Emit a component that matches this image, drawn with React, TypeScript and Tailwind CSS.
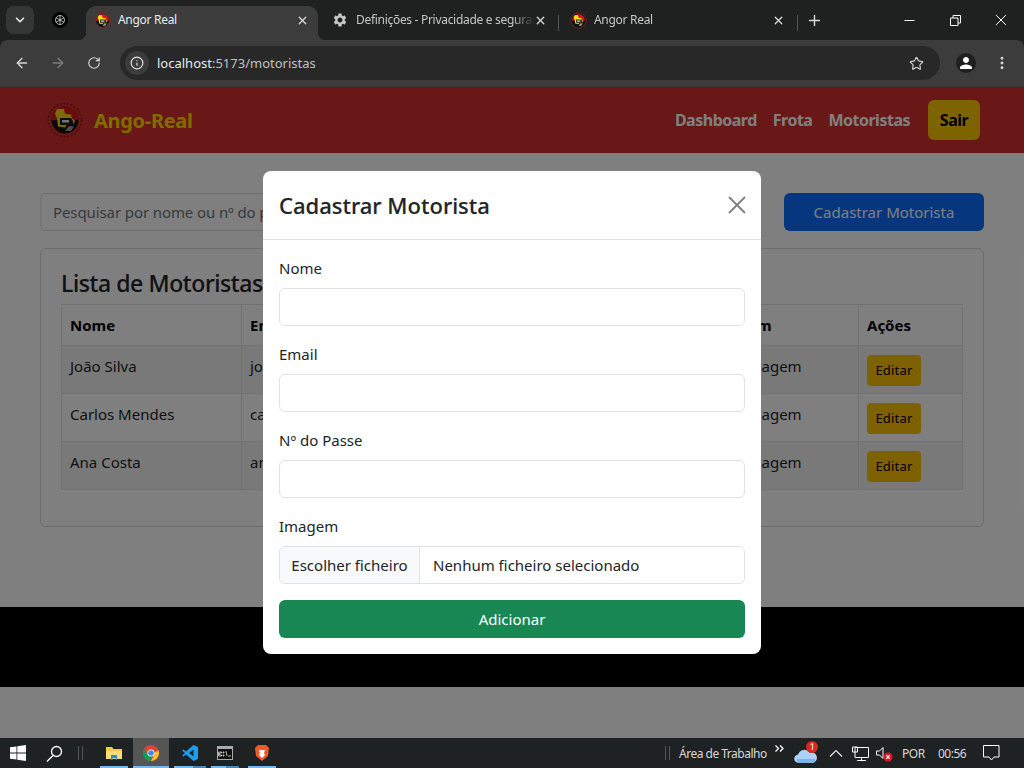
import { ChevronDown, Info, MoreVertical, Plus, RotateCw, Star, X, ArrowLeft, ArrowRight } from "lucide-react";
import { MdPerson, MdSettings } from "react-icons/md";

const motoristas = [
  { nome: "João Silva", email: "joao@email.com", passe: "LD123456" },
  { nome: "Carlos Mendes", email: "carlos@email.com", passe: "LD654321" },
  { nome: "Ana Costa", email: "ana@email.com", passe: "LD112233" },
];

function AngoLogo({ size }: { size: number }) {
  return (
    <svg width={size} height={size} viewBox="0 0 36 36" className="shrink-0">
      <circle cx="18" cy="18" r="16.5" fill="none" stroke="#a51d1d" strokeWidth="2" strokeDasharray="2 1.6" />
      <circle cx="18" cy="18" r="13.5" fill="#16100e" />
      <path d="M4.500 18a13.500 13.500 0 0 1 27 0z" fill="#d9161b" />
      <path d="M10 7h7l1 5 6 .5 1 4 3 2-1 3-7 1-2 3-7-1-1-8-2-5z" fill="#f7dd0c" />
      <path d="M13 16h11l2 3v4H13z" fill="#1d1d1d" />
      <path d="M15 18h7v2.500h-7z" fill="#e6e6e6" />
      <path d="M18 29l4-5 5 .5-3 4.500z" fill="#9a9a9a" />
    </svg>
  );
}

function Tab({ icon, title, active, className }: { icon: React.ReactNode; title: string; active?: boolean; className: string }) {
  return (
    <div className={`${className} h-[34px] flex items-center pb-[6px] relative ${active ? "bg-[#3c3c3c] rounded-t-[10px] text-[#e8eaed]" : "text-[#c4c7c5]"}`}>
      {active && (
        <>
          <div className="absolute left-[-8px] bottom-0 w-2 h-2 bg-[radial-gradient(circle_at_0_0,transparent_8px,#3c3c3c_8.5px)]" />
          <div className="absolute right-[-8px] bottom-0 w-2 h-2 bg-[radial-gradient(circle_at_100%_0,transparent_8px,#3c3c3c_8.5px)]" />
        </>
      )}
      <span className="w-4 h-4 flex items-center justify-center shrink-0">{icon}</span>
      <span className={`ml-2 flex-1 text-[12px] tracking-[-0.3px] whitespace-nowrap overflow-hidden ${active ? "" : "[mask-image:linear-gradient(to_right,black_88%,transparent)]"}`}>{title}</span>
      <X size={13} strokeWidth={2.5} className="shrink-0 text-[#d5d7d8]" />
    </div>
  );
}

function ChromeBar() {
  return (
    <div className="font-['Noto_Sans',sans-serif]">
      <div className="h-10 bg-[#1f2121] flex items-end relative">
        <div className="absolute left-[6px] top-[6px] w-7 h-7 rounded-lg bg-[#353636] flex items-center justify-center">
          <ChevronDown size={14} strokeWidth={3} className="text-[#e3e3e3]" />
        </div>
        <div className="absolute left-[52px] top-[12px] w-4 h-4 rounded-full bg-black flex items-center justify-center">
          <svg width="12" height="12" viewBox="0 0 24 24" fill="none" stroke="#d8d8d8" strokeWidth="1.6">
            <circle cx="12" cy="12" r="9" />
            <path d="M12 3v18M4 7.500l16 9M20 7.500l-16 9" />
          </svg>
        </div>
        <div className="ml-[86px] flex items-end">
          <Tab className="w-[232px] pl-[8px] pr-[9px]" active title="Angor Real" icon={<AngoLogo size={17} />} />
          <div className="w-[6px]" />
          <Tab className="w-[234px] pl-[8px] pr-[11px]" title="Definições - Privacidade e segurança" icon={<MdSettings size={18} className="text-[#c4c7c5]" />} />
          <div className="w-px h-4 bg-[#555] mb-[9px]" />
          <Tab className="w-[238px] pl-[11px] pr-[12px]" title="Angor Real" icon={<AngoLogo size={17} />} />
          <div className="w-px h-4 bg-[#555] mb-[9px]" />
          <div className="w-[32px] h-[34px] pb-[6px] flex items-center justify-center">
            <Plus size={17} strokeWidth={2} className="text-[#d5d7d8]" />
          </div>
        </div>
        <div className="absolute right-0 top-0 h-10 flex items-center text-white">
          <div className="w-[46px] flex justify-center">
            <svg width="11" height="11" viewBox="0 0 11 11" fill="none" stroke="currentColor"><path d="M.5 5.500h10" /></svg>
          </div>
          <div className="w-[46px] flex justify-center">
            <svg width="11" height="11" viewBox="0 0 11 11" fill="none" stroke="currentColor">
              <path d="M.5 3h7.500v7.500H.5zM3 3V.5h7.500V8H8" />
            </svg>
          </div>
          <div className="w-[46px] flex justify-center">
            <svg width="12" height="12" viewBox="0 0 12 12" fill="none" stroke="currentColor"><path d="M1 1l10 10M11 1L1 11" /></svg>
          </div>
        </div>
      </div>
      <div className="h-[47px] bg-[#3c3c3c] rounded-t-[8px] flex items-center border-b border-[#333]">
        <div className="w-[44px] flex justify-center"><ArrowLeft size={16} strokeWidth={2} className="text-[#d5d7d8]" /></div>
        <div className="w-[28px] flex justify-center"><ArrowRight size={16} strokeWidth={2} className="text-[#7b7c7d]" /></div>
        <div className="w-[44px] flex justify-center"><RotateCw size={14} strokeWidth={2} className="text-[#d5d7d8]" /></div>
        <div className="ml-[4px] w-[820px] h-[34px] rounded-full bg-[#282828] flex items-center pl-[5px] relative">
          <div className="w-6 h-6 rounded-full bg-[#3c3c3c] flex items-center justify-center">
            <Info size={14} className="text-[#e3e3e3]" />
          </div>
          <span className="ml-2 mt-px text-[13px] text-[#e8e8e8]">localhost<span className="text-[#bdc1c6]">:5173/motoristas</span></span>
          <Star size={15} strokeWidth={1.8} className="absolute right-[16px] text-[#d5d7d8]" />
        </div>
        <div className="ml-[16px] w-5 h-5 rounded-full bg-[#1f1f1f] flex items-center justify-center">
          <MdPerson size={18} className="text-white" />
        </div>
        <MoreVertical size={16} strokeWidth={2.4} className="ml-[18px] text-[#d5d7d8]" />
      </div>
    </div>
  );
}

function PageBehind() {
  return (
    <div className="bg-white h-[651px] font-['Noto_Sans',sans-serif] text-[#212529]">
      <nav className="h-[66px] bg-[#d22f2f] pl-[47px] pr-[44px] flex items-center">
        <AngoLogo size={36} />
        <span className="ml-[11px] mt-[2px] text-[20px] font-bold text-[#ffd700] tracking-[-0.3px]">Ango-Real</span>
        <div className="ml-auto flex items-center gap-4 text-[16px] font-bold text-white tracking-[-0.5px]">
          <span>Dashboard</span>
          <span>Frota</span>
          <span>Motoristas</span>
          <span className="ml-[2px] w-[52px] h-10 rounded-md bg-[#fdc800] text-black flex items-center justify-center">Sair</span>
        </div>
      </nav>
      <main className="h-[454px] px-10 pt-10">
        <div className="flex gap-6">
          <input
            className="flex-1 h-[38px] border border-[#dee2e6] rounded-md px-3 text-[15px] tracking-[-0.1px] placeholder:text-[#6c757d]"
            placeholder="Pesquisar por nome ou nº do passe"
          />
          <div className="w-[200px] h-[38px] rounded-md bg-[#0d6efd] text-white text-[15px] flex items-center justify-center">
            Cadastrar Motorista
          </div>
        </div>
        <div className="mt-[17px] h-[279px] border border-black/15 rounded-md px-5 pt-5">
          <h2 className="text-[23px] leading-7 font-medium tracking-[-0.4px] [-webkit-text-stroke:0.15px_currentColor]">Lista de Motoristas</h2>
          <table className="mt-[7px] w-[902px] table-fixed border-collapse text-[15px]">
            <thead>
              <tr className="h-[41px]">
                <th className="w-[180px] border border-[#dee2e6] px-2 text-left font-bold text-black">Nome</th>
                <th className="w-[240px] border border-[#dee2e6] px-2 text-left font-bold text-black">Email</th>
                <th className="w-[219px] border border-[#dee2e6] px-2 text-left font-bold text-black">Nº do Passe</th>
                <th className="w-[158px] border border-[#dee2e6] px-2 text-left font-bold text-black">Imagem</th>
                <th className="border border-[#dee2e6] px-2 text-left font-bold text-black">Ações</th>
              </tr>
            </thead>
            <tbody>
              {motoristas.map((m, i) => (
                <tr key={m.nome} className={`h-12 ${i % 2 === 0 ? "bg-black/5" : ""}`}>
                  <td className="border border-[#dee2e6] px-2 align-top pt-[9px]">{m.nome}</td>
                  <td className="border border-[#dee2e6] px-2 align-top pt-[9px]">{m.email}</td>
                  <td className="border border-[#dee2e6] px-2 align-top pt-[9px]">{m.passe}</td>
                  <td className="border border-[#dee2e6] px-2 align-top pt-[9px]">Sem imagem</td>
                  <td className="border border-[#dee2e6] px-2 pt-[2px]">
                    <span className="w-[54px] h-[31px] rounded bg-[#ffc107] text-black text-[13px] tracking-[0.2px] flex items-center justify-center">Editar</span>
                  </td>
                </tr>
              ))}
            </tbody>
          </table>
        </div>
      </main>
      <footer className="h-[80px] bg-black" />
    </div>
  );
}

function Field({ label }: { label: string }) {
  return (
    <div>
      <label className="block text-[15px] leading-[20px]">{label}</label>
      <input className="mt-[10px] block w-full h-[38px] border border-[#dee2e6] rounded-md" />
    </div>
  );
}

function ModalCadastro() {
  return (
    <div className="absolute left-[263px] top-[84px] w-[498px] h-[483px] bg-white rounded-lg font-['Noto_Sans',sans-serif] text-[#212529]">
      <div className="h-[69px] border-b border-[#dee2e6] px-4 flex items-center justify-between">
        <h3 className="text-[22px] font-medium [-webkit-text-stroke:0.15px_currentColor]">Cadastrar Motorista</h3>
        <svg width="18" height="18" viewBox="0 0 18 18" fill="none" stroke="#808080" strokeWidth="1.9" className="mr-[-1px]">
          <path d="M1 1l16 16M17 1L1 17" />
        </svg>
      </div>
      <div className="px-4 pt-[18px] flex flex-col gap-[18px]">
        <Field label="Nome" />
        <Field label="Email" />
        <Field label="Nº do Passe" />
        <div>
          <label className="block text-[15px] leading-[20px]">Imagem</label>
          <div className="mt-[10px] h-[38px] border border-[#dee2e6] rounded-md flex overflow-hidden text-[15px]">
            <span className="w-[140px] bg-[#f8f9fa] border-r border-[#dee2e6] flex items-center justify-center">Escolher ficheiro</span>
            <span className="pl-[13px] flex items-center">Nenhum ficheiro selecionado</span>
          </div>
        </div>
      </div>
      <div className="mx-4 mt-4 h-[38px] rounded-md bg-[#198754] text-white text-[15px] flex items-center justify-center">
        Adicionar
      </div>
    </div>
  );
}

function TaskItem({ className, split, children }: { className: string; split?: boolean; children: React.ReactNode }) {
  return (
    <div className={`${className} h-[30px] relative flex items-center justify-center shrink-0`}>
      {children}
      <div className="absolute left-0 right-0 bottom-0 h-[2px] bg-[#76b9ed]" />
      {split && <div className="absolute right-0 bottom-0 w-[13px] h-[2px] bg-[#4d86b3]" />}
    </div>
  );
}

function Taskbar() {
  return (
    <div className="h-[30px] bg-[#1f2223] relative flex items-center text-[#d8d8d8] font-['Noto_Sans',sans-serif] text-[12px] tracking-[-0.5px]">
      <svg width="16" height="16" viewBox="0 0 16 16" fill="#fff" className="ml-[10px] shrink-0">
        <path d="M0 2.300l6.500-.9v6.200H0zM7.300 1.300L16 0v7.600H7.300zM0 8.400h6.500v6.200L0 13.700zM7.300 8.400H16V16l-8.700-1.200z" />
      </svg>
      <svg width="17" height="17" viewBox="0 0 17 17" fill="none" stroke="#fff" strokeWidth="1.3" className="ml-[20px] shrink-0">
        <circle cx="10.500" cy="6.500" r="5" />
        <path d="M7 10.500L1 16.500" />
      </svg>
      <div className="ml-[15px] w-[5px] h-[14px] border-x border-[#555] shrink-0" />
      <TaskItem className="ml-[17px] w-[28px]">
        <svg width="16" height="14" viewBox="0 0 16 14">
          <path d="M0 1h6l1.500 2H16v10H0z" fill="#f6c94e" />
          <path d="M0 5h16v8H0z" fill="#fbdc7c" />
          <path d="M5 9h6v5H9.500v-2h-3v2H5z" fill="#2a8ad4" />
        </svg>
      </TaskItem>
      <TaskItem className="ml-[5px] w-9 bg-[#555]">
        <svg width="16" height="16" viewBox="0 0 16 16">
          <circle cx="8" cy="8" r="8" fill="#db4437" />
          <path d="M8 16a8 8 0 0 1-7-12l3.500 6L8 11z" fill="#0f9d58" />
          <path d="M15.500 5.200A8 8 0 0 1 8 16l3.400-6-.4-2z" fill="#fbc02d" />
          <circle cx="8" cy="8" r="3.600" fill="#fff" />
          <circle cx="8" cy="8" r="2.800" fill="#4285f4" />
        </svg>
      </TaskItem>
      <TaskItem className="ml-[5px] w-8" split>
        <svg width="16" height="16" viewBox="0 0 16 16">
          <path d="M11.500 0L16 2v12l-4.500 2L4 9.500 1.500 11.500 0 10.500 3 8 0 5.500l1.500-1L4 6.500zM11.500 4.500L7 8l4.500 3.500z" fill="#1f9cf0" fillRule="evenodd" />
        </svg>
      </TaskItem>
      <TaskItem className="ml-[5px] w-[28px]" split>
        <svg width="16" height="14" viewBox="0 0 16 14">
          <rect x="0.500" y="0.500" width="15" height="13" fill="#111" stroke="#aaa" />
          <path d="M1 1h14v2H1z" fill="#aaa" />
          <path d="M2.500 6h2v1h-2v2h2v1h-3V6zM6 6h1v1H6zM6 9h1v1H6zM9 5l1 5M11 10h3" stroke="#eee" strokeWidth=".7" fill="none" />
        </svg>
      </TaskItem>
      <TaskItem className="ml-[9px] w-[28px]">
        <svg width="14" height="16" viewBox="0 0 14 16">
          <path d="M3 0h8l3 3-1 8-6 5-6-5-1-8z" fill="#f1582a" />
          <path d="M4 5h6l-1 3 1 2-3 3-3-3 1-2z" fill="#fff" />
        </svg>
      </TaskItem>

      <div className="absolute left-[665px] w-[5px] h-[14px] border-x border-[#555]" />
      <span className="absolute left-[679px] mt-px">Área de Trabalho</span>
      <svg width="9" height="7" viewBox="0 0 9 7" fill="none" stroke="#fff" strokeWidth="1.300" className="absolute left-[775px] top-[7px]">
        <path d="M.5.5L3.500 3.500.5 6.500M5 .5l3 3-3 3" />
      </svg>
      <svg width="24" height="17" viewBox="0 0 26 18" className="absolute left-[794px] top-[8px]">
        <path d="M5 18a4.500 4.500 0 0 1-.5-9A7 7 0 0 1 17 7a5.500 5.500 0 0 1 4 11z" fill="#a9d2f5" />
        <path d="M3 14h20v1.500a2.500 2.500 0 0 1-2 2.500H5a4 4 0 0 1-2-4z" fill="#7db6ea" />
      </svg>
      <span className="absolute left-[806px] top-[3px] w-[12px] h-[12px] rounded-full bg-[#d8291f] text-white text-[9px] flex items-center justify-center">1</span>
      <svg width="14" height="8" viewBox="0 0 14 8" fill="none" stroke="#e5e5e5" strokeWidth="1.200" className="absolute left-[829px] top-[11px]">
        <path d="M1 7.500l6-6 6 6" />
      </svg>
      <svg width="17" height="16" viewBox="0 0 17 16" fill="none" stroke="#fff" className="absolute left-[852px] top-[8px]">
        <path d="M3 1.500h13.500v10H3zM.5 1h5v5h-5zM9.500 11.500v3M5 14.500h9" />
      </svg>
      <svg width="17" height="16" viewBox="0 0 17 16" className="absolute left-[876px] top-[8px]">
        <path d="M.5 5h3L7 1.500v11L3.500 9h-3z" fill="none" stroke="#fff" />
        <circle cx="12" cy="11" r="4.500" fill="#e81123" />
        <path d="M10.200 9.200l3.600 3.600M13.800 9.200l-3.600 3.600" stroke="#fff" strokeWidth="1.200" />
      </svg>
      <span className="absolute left-[902px] mt-px">POR</span>
      <span className="absolute left-[938px] mt-px">00:56</span>
      <svg width="17" height="16" viewBox="0 0 17 16" fill="none" stroke="#fff" className="absolute left-[983px] top-[7px]">
        <path d="M.5.5h15.500v11.500H11l-2.500 3-2.500-3H.5z" />
      </svg>
    </div>
  );
}

export default function App() {
  return (
    <div className="w-[1024px] h-[768px] overflow-hidden bg-[#1f2121]">
      <ChromeBar />
      <div className="relative h-[651px] overflow-hidden">
        <PageBehind />
        <div className="absolute inset-0 bg-black/50" />
        <ModalCadastro />
      </div>
      <Taskbar />
    </div>
  );
}
